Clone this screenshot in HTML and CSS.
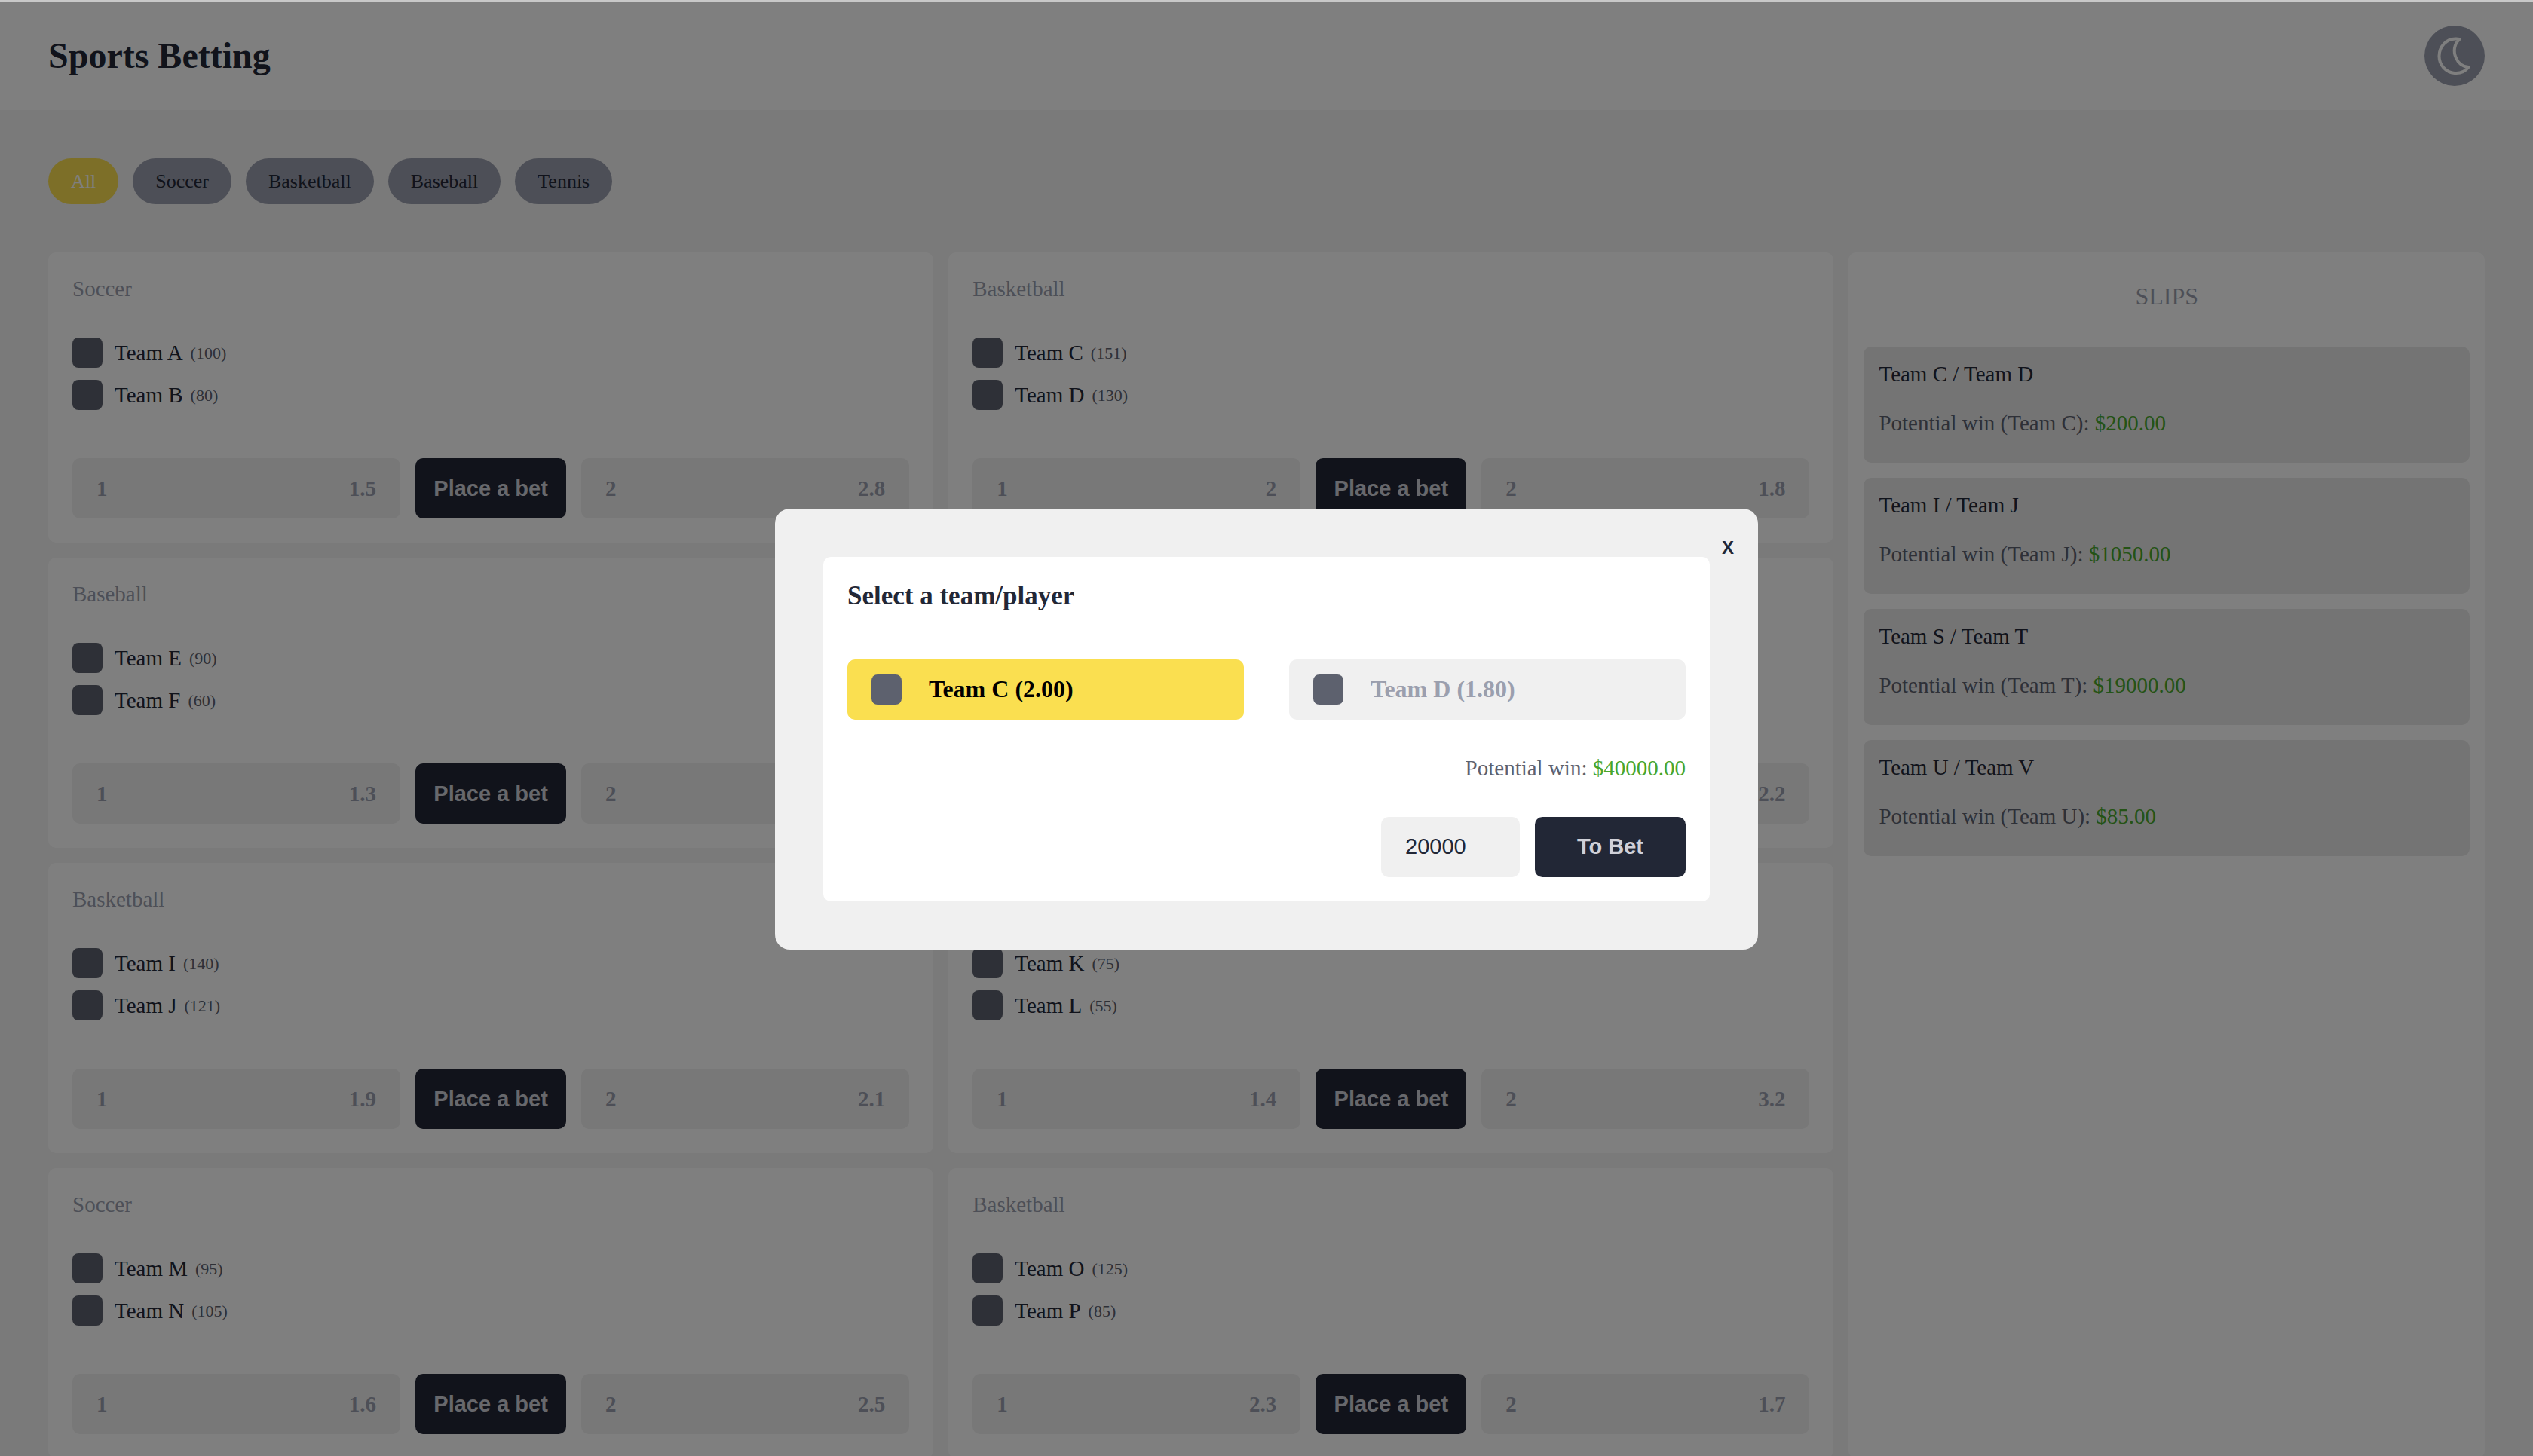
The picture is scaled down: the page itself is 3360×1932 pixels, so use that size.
FILE: index.html
```html
<!DOCTYPE html>
<html lang="en">
<head>
<meta charset="utf-8">
<meta name="viewport" content="width=device-width, initial-scale=1">
<title>Sports Betting</title>
<link rel="stylesheet" href="styles.css">
</head>
<body>
<header class="header">
  <h1 class="header-title">Sports Betting</h1>
  <button class="theme-toggle" type="button" aria-label="Toggle dark mode">
    <svg class="theme-icon" viewBox="0 0 80 80" aria-hidden="true"><path d="M46.500 18C39 25 38 35 42 43C45 50 51 54.500 58.500 55C53 62 46 63.500 40 63C28 62 19.500 52 19.500 40.500C19.500 28 29 17 42 17.500Z"/></svg>
  </button>
</header>
<main class="page">
  <nav class="filters" aria-label="Sports">
    <button class="filter filter-active" type="button">All</button>
    <button class="filter" type="button">Soccer</button>
    <button class="filter" type="button">Basketball</button>
    <button class="filter" type="button">Baseball</button>
    <button class="filter" type="button">Tennis</button>
  </nav>
  <div class="board">
    <section class="events" id="events" aria-label="Events"></section>
    <aside class="slips">
      <h2 class="slips-title">SLIPS</h2>
      <ul class="slip-list">
        <li class="slip"><p class="slip-match">Team C / Team D</p><p class="slip-win">Potential win (Team C): <span class="money">$200.00</span></p></li>
        <li class="slip"><p class="slip-match">Team I / Team J</p><p class="slip-win">Potential win (Team J): <span class="money">$1050.00</span></p></li>
        <li class="slip"><p class="slip-match">Team S / Team T</p><p class="slip-win">Potential win (Team T): <span class="money">$19000.00</span></p></li>
        <li class="slip"><p class="slip-match">Team U / Team V</p><p class="slip-win">Potential win (Team U): <span class="money">$85.00</span></p></li>
      </ul>
    </aside>
  </div>
</main>
<div class="overlay">
  <div class="modal" role="dialog" aria-modal="true" aria-labelledby="modal-title">
    <button class="modal-close" type="button" aria-label="Close">X</button>
    <form class="bet-form">
      <h2 class="bet-title" id="modal-title">Select a team/player</h2>
      <div class="options">
        <button class="option option-selected" type="button" aria-pressed="true"><span class="badge"></span>Team C (2.00)</button>
        <button class="option" type="button" aria-pressed="false"><span class="badge"></span>Team D (1.80)</button>
      </div>
      <p class="bet-win">Potential win: <span class="money">$40000.00</span></p>
      <div class="bet-actions">
        <input class="amount" type="text" inputmode="numeric" value="20000" aria-label="Bet amount">
        <button class="button" type="submit">To Bet</button>
      </div>
    </form>
  </div>
</div>
<script src="events.js"></script>
</body>
</html>
```
FILE: styles.css
```css
* {
  box-sizing: border-box;
  margin: 0;
  padding: 0;
}

html {
  height: 100%;
  overflow: hidden;
}

body {
  height: 100%;
  overflow: hidden;
  border-top: 2px solid #c8c8c8;
  background: #f4f4f4;
  color: #222736;
  font-family: "Liberation Serif", "Times New Roman", serif;
  font-size: 29px;
  line-height: 33px;
}

button,
input {
  border: 0;
  font: inherit;
  color: inherit;
}

ul {
  list-style: none;
}

.header {
  display: flex;
  align-items: center;
  justify-content: space-between;
  padding: 32px 64px;
  background: #fff;
}

.header-title {
  font-size: 48px;
  line-height: 56px;
}

.theme-toggle {
  width: 80px;
  height: 80px;
  border-radius: 50%;
  background: #9b9fae;
}

.theme-icon {
  display: block;
  width: 80px;
  height: 80px;
  fill: none;
  stroke: #fff;
  stroke-width: 4;
  stroke-linejoin: round;
}

.page {
  display: grid;
  gap: 64px;
  padding: 64px;
}

.filters {
  display: flex;
  gap: 19px;
}

.filter {
  padding: 16px 30px;
  border-radius: 32px;
  background: #9b9fae;
  font-size: 26px;
  line-height: 29px;
}

.filter-active {
  background: #fadf50;
  color: #fff;
}

.board {
  display: grid;
  grid-template-columns: 73fr 26fr;
  gap: 20px;
}

.events {
  display: grid;
  grid-template-columns: 1fr 1fr;
  gap: 20px;
}

.event {
  padding: 32px;
  border-radius: 10px;
  background: #fff;
}

.event-sport {
  margin-bottom: 48px;
  color: #9b9fae;
}

.teams {
  display: grid;
  gap: 16px;
  margin-bottom: 64px;
}

.team {
  display: flex;
  align-items: center;
}

.badge {
  width: 40px;
  height: 40px;
  border-radius: 8px;
  background: #5d616e;
}

.team-name {
  margin: 0 10px 0 16px;
}

.team-score {
  color: #5d616e;
  font-size: 22px;
}

.odds {
  display: grid;
  grid-template-columns: 1fr 200px 1fr;
  gap: 20px;
}

.odd {
  display: flex;
  align-items: center;
  justify-content: space-between;
  padding: 0 32px;
  border-radius: 10px;
  background: #f0f0f0;
  color: #9b9fae;
  font-weight: 700;
}

.button {
  width: 200px;
  height: 80px;
  border-radius: 10px;
  background: #222736;
  color: #cfd0d8;
  font-family: "Liberation Sans", Arial, sans-serif;
  font-weight: 700;
}

.slips {
  padding: 20px;
  border-radius: 10px;
  background: #fff;
}

.slips-title {
  margin: 20px 0 48px;
  color: #9b9fae;
  font-size: 32px;
  font-weight: 400;
  line-height: 37px;
  text-align: center;
}

.slip-list {
  display: grid;
  gap: 20px;
}

.slip {
  padding: 20px 20px 36px;
  border-radius: 10px;
  background: #e9e9e9;
}

.slip-match {
  margin-bottom: 32px;
}

.slip-win,
.bet-win {
  color: #5d616e;
}

.money {
  color: #49a62c;
}

.overlay {
  position: fixed;
  inset: 2px 0 0;
  display: flex;
  align-items: center;
  justify-content: center;
  background: rgba(0, 0, 0, 0.5);
}

.modal {
  position: relative;
  width: 1304px;
  max-width: 100%;
  padding: 64px;
  border-radius: 20px;
  background: #f0f0f0;
}

.modal-close {
  position: absolute;
  top: 38px;
  right: 32px;
  background: none;
  font-family: "Liberation Sans", Arial, sans-serif;
  font-size: 24px;
  font-weight: 700;
  line-height: 28px;
}

.bet-form {
  padding: 32px;
  border-radius: 10px;
  background: #fff;
}

.bet-title {
  margin-bottom: 64px;
  font-size: 35px;
  line-height: 40px;
}

.options {
  display: grid;
  grid-template-columns: 1fr 1fr;
  gap: 60px;
  margin-bottom: 48px;
}

.option {
  display: flex;
  align-items: center;
  gap: 36px;
  height: 80px;
  padding: 0 32px;
  border-radius: 10px;
  background: #f0f0f0;
  color: #9b9fae;
  font-size: 32px;
  font-weight: 700;
}

.option-selected {
  background: #fadf50;
  color: #000;
}

.bet-win {
  margin-bottom: 48px;
  text-align: right;
}

.bet-actions {
  display: flex;
  justify-content: flex-end;
  gap: 20px;
}

.amount {
  width: 184px;
  height: 80px;
  padding: 0 32px;
  border-radius: 10px;
  background: #f0f0f0;
  font-family: "Liberation Sans", Arial, sans-serif;
}
```
FILE: events.js
```js
const events = [
  ["Soccer", "Team A", 100, "Team B", 80, "1.5", "2.8"],
  ["Basketball", "Team C", 151, "Team D", 130, "2", "1.8"],
  ["Baseball", "Team E", 90, "Team F", 60, "1.3", "2.9"],
  ["Tennis", "Team G", 40, "Team H", 30, "1.7", "2.2"],
  ["Basketball", "Team I", 140, "Team J", 121, "1.9", "2.1"],
  ["Basketball", "Team K", 75, "Team L", 55, "1.4", "3.2"],
  ["Soccer", "Team M", 95, "Team N", 105, "1.6", "2.5"],
  ["Basketball", "Team O", 125, "Team P", 85, "2.3", "1.7"]
];

const team = (name, score) =>
  `<li class="team"><span class="badge"></span><span class="team-name">${name}</span><span class="team-score">(${score})</span></li>`;

const odd = (place, value) =>
  `<div class="odd"><span>${place}</span><span>${value}</span></div>`;

document.getElementById("events").innerHTML = events
  .map(([sport, home, homeScore, away, awayScore, first, second]) => `
    <article class="event">
      <p class="event-sport">${sport}</p>
      <ul class="teams">${team(home, homeScore)}${team(away, awayScore)}</ul>
      <div class="odds">${odd(1, first)}<button class="button" type="button">Place a bet</button>${odd(2, second)}</div>
    </article>`)
  .join("");
```
